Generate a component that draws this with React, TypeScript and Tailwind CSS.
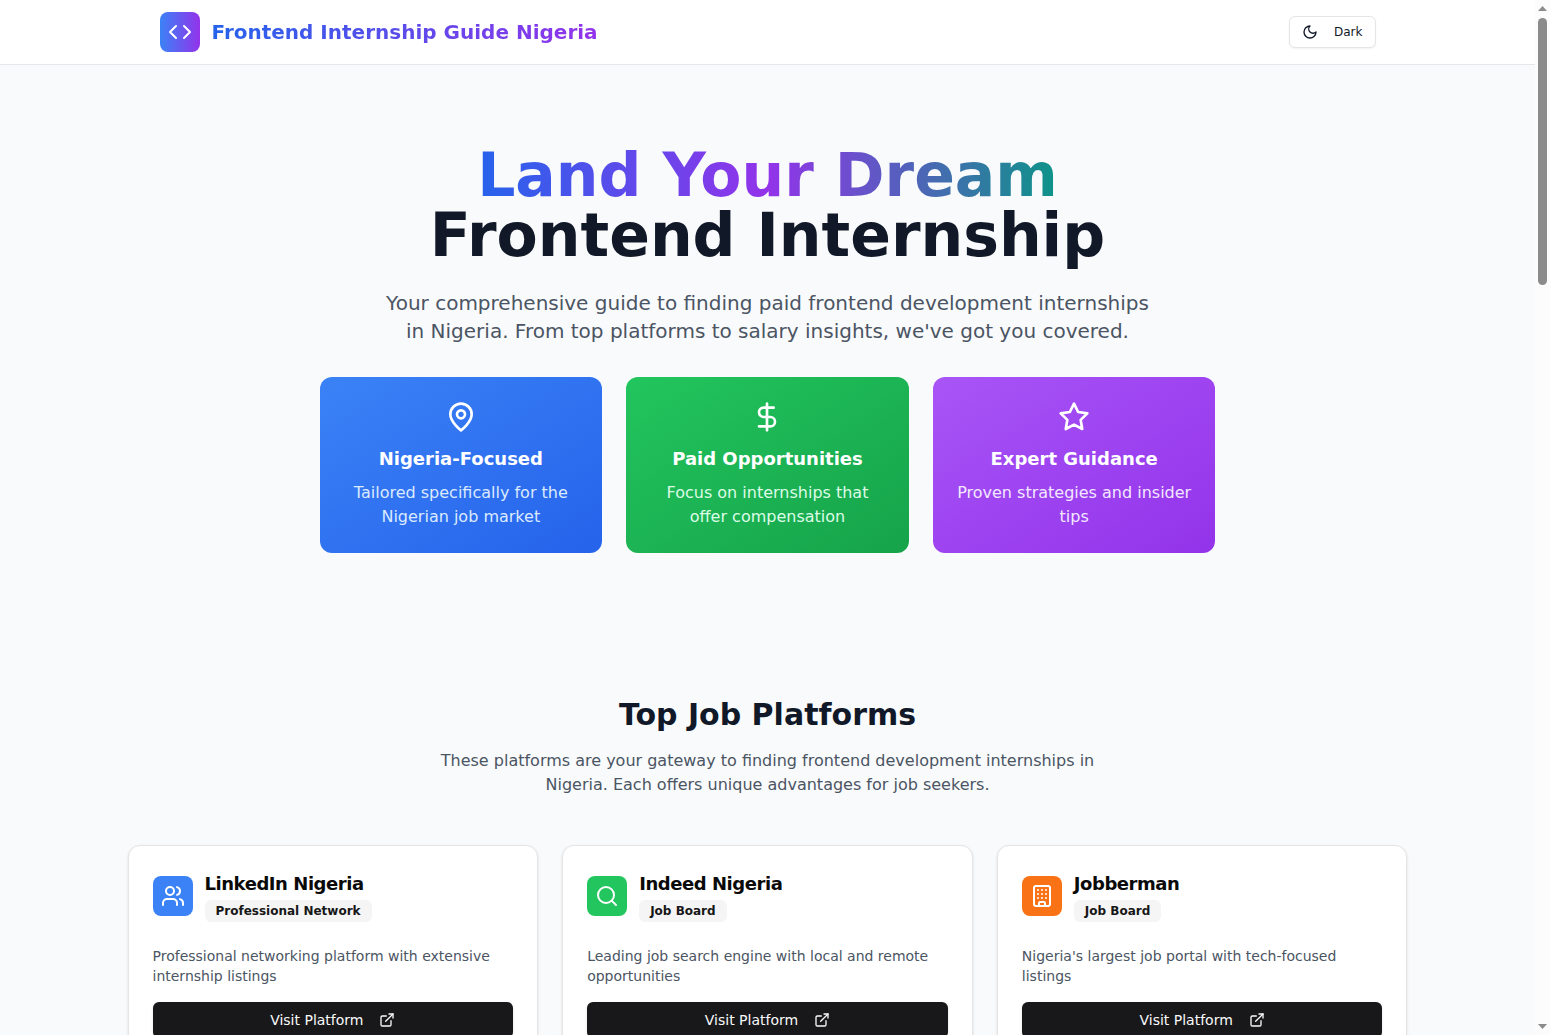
import type { ComponentType, ReactNode } from "react";
import { Building, Code, DollarSign, ExternalLink, Search, Users } from "lucide-react";

type IconProps = { className?: string };

function StrokeIcon({ className, children }: IconProps & { children: ReactNode }) {
  return (
    <svg
      viewBox="0 0 24 24"
      fill="none"
      stroke="currentColor"
      strokeWidth="2"
      strokeLinecap="round"
      strokeLinejoin="round"
      aria-hidden="true"
      className={className}
    >
      {children}
    </svg>
  );
}

function MoonIcon({ className }: IconProps) {
  return (
    <StrokeIcon className={className}>
      <path d="M12 3a6 6 0 0 0 9 9 9 9 0 1 1-9-9Z" />
    </StrokeIcon>
  );
}

function PinIcon({ className }: IconProps) {
  return (
    <StrokeIcon className={className}>
      <path d="M20 10c0 6-8 12-8 12s-8-6-8-12a8 8 0 0 1 16 0Z" />
      <circle cx="12" cy="10" r="3" />
    </StrokeIcon>
  );
}

function StarIcon({ className }: IconProps) {
  return (
    <StrokeIcon className={className}>
      <polygon points="12 2 15.09 8.26 22 9.27 17 14.14 18.18 21.02 12 17.77 5.82 21.02 7 14.14 2 9.27 8.91 8.26 12 2" />
    </StrokeIcon>
  );
}

type Feature = {
  title: string;
  text: string;
  icon: ComponentType<IconProps>;
  box: string;
  tint: string;
};

const features: Feature[] = [
  {
    title: "Nigeria-Focused",
    text: "Tailored specifically for the Nigerian job market",
    icon: PinIcon,
    box: "from-[#3b82f6] to-[#2563eb]",
    tint: "text-[#dbeafe]",
  },
  {
    title: "Paid Opportunities",
    text: "Focus on internships that offer compensation",
    icon: DollarSign,
    box: "from-[#22c55e] to-[#16a34a]",
    tint: "text-[#dcfce7]",
  },
  {
    title: "Expert Guidance",
    text: "Proven strategies and insider tips",
    icon: StarIcon,
    box: "from-[#a855f7] to-[#9333ea]",
    tint: "text-[#f3e8ff]",
  },
];

type Platform = {
  name: string;
  kind: string;
  text: string;
  icon: ComponentType<IconProps>;
  color: string;
  href: string;
};

const platforms: Platform[] = [
  {
    name: "LinkedIn Nigeria",
    kind: "Professional Network",
    text: "Professional networking platform with extensive internship listings",
    icon: Users,
    color: "bg-[#3b82f6]",
    href: "#linkedin",
  },
  {
    name: "Indeed Nigeria",
    kind: "Job Board",
    text: "Leading job search engine with local and remote opportunities",
    icon: Search,
    color: "bg-[#22c55e]",
    href: "#indeed",
  },
  {
    name: "Jobberman",
    kind: "Job Board",
    text: "Nigeria's largest job portal with tech-focused listings",
    icon: Building,
    color: "bg-[#f97316]",
    href: "#jobberman",
  },
];

function Header() {
  return (
    <header className="border-b border-[#e5e7eb] bg-white">
      <div className="mx-auto flex max-w-7xl items-center justify-between px-8 py-3">
        <div className="flex items-center gap-3">
          <div className="flex size-10 items-center justify-center rounded-lg bg-linear-to-r/srgb from-[#3b82f6] to-[#9333ea]">
            <Code className="size-6 text-white" />
          </div>
          <span className="bg-linear-to-r/srgb from-[#2563eb] to-[#9333ea] bg-clip-text text-xl font-bold text-transparent">
            Frontend Internship Guide Nigeria
          </span>
        </div>
        <button
          type="button"
          className="flex h-8 items-center gap-4 rounded-md border border-[#e5e5e5] bg-white px-3 text-xs font-medium text-[#111827] shadow-xs"
        >
          <MoonIcon className="size-4" />
          Dark
        </button>
      </div>
    </header>
  );
}

function Hero() {
  return (
    <section className="px-8 py-20 text-center">
      <h1 className="mb-6 text-6xl font-bold text-[#111827]">
        <span className="bg-linear-to-r/srgb from-[#2563eb] via-[#9333ea] to-[#0d9488] bg-clip-text text-transparent">
          Land Your Dream
        </span>
        <br />
        Frontend Internship
      </h1>
      <p className="mx-auto mb-8 max-w-3xl text-xl leading-7 text-[#4b5563]">
        Your comprehensive guide to finding paid frontend development internships in Nigeria. From
        top platforms to salary insights, we've got you covered.
      </p>
      <div className="mx-auto grid max-w-4xl grid-cols-3 gap-6">
        {features.map(({ title, text, icon: Icon, box, tint }) => (
          <div key={title} className={`rounded-xl bg-linear-to-br/srgb p-6 text-white ${box}`}>
            <Icon className="mx-auto mb-3 size-8" />
            <h3 className="mb-2 text-lg font-semibold">{title}</h3>
            <p className={tint}>{text}</p>
          </div>
        ))}
      </div>
    </section>
  );
}

function PlatformCard({ name, kind, text, icon: Icon, color, href }: Platform) {
  return (
    <article className="rounded-xl border border-[#e5e5e5] bg-white p-6 shadow-sm">
      <div className="mb-6 flex items-center gap-3">
        <div className={`flex size-10 items-center justify-center rounded-lg text-white ${color}`}>
          <Icon className="size-6" />
        </div>
        <div className="flex flex-col items-start gap-0.5">
          <h3 className="text-lg font-semibold tracking-tight text-[#0a0a0a]">{name}</h3>
          <span className="rounded-md border border-transparent bg-[#f5f5f5] px-2.5 py-0.5 text-xs font-semibold text-[#171717]">
            {kind}
          </span>
        </div>
      </div>
      <p className="mb-4 text-sm text-[#4b5563]">{text}</p>
      <a
        href={href}
        className="flex h-9 items-center justify-center gap-4 rounded-md bg-[#18181b] px-4 text-sm font-medium text-[#fafafa] shadow-sm"
      >
        Visit Platform
        <ExternalLink className="size-4" />
      </a>
    </article>
  );
}

function Platforms() {
  return (
    <section className="px-8 py-16">
      <div className="mb-12 text-center">
        <h2 className="mb-4 text-3xl font-bold text-[#111827]">Top Job Platforms</h2>
        <p className="mx-auto max-w-2xl text-[#4b5563]">
          These platforms are your gateway to finding frontend development internships in Nigeria.
          Each offers unique advantages for job seekers.
        </p>
      </div>
      <div className="mx-auto grid max-w-7xl grid-cols-3 gap-6">
        {platforms.map((platform) => (
          <PlatformCard key={platform.name} {...platform} />
        ))}
      </div>
    </section>
  );
}

function ScrollTrack() {
  return (
    <div
      aria-hidden="true"
      className="flex w-[15px] shrink-0 flex-col items-center justify-between bg-[#fcfcfc] py-1.5"
    >
      <div className="flex min-h-0 flex-1 flex-col items-center gap-[7px]">
        <svg viewBox="0 0 9 5" className="h-[5px] w-[9px] shrink-0 fill-[#8b8b8b]">
          <path d="M4.5 0 9 5H0z" />
        </svg>
        <div className="h-[267px] w-[9px] rounded-full bg-[#8b8b8b]" />
      </div>
      <svg viewBox="0 0 9 5" className="h-[5px] w-[9px] shrink-0 fill-[#8b8b8b]">
        <path d="M0 0h9L4.5 5z" />
      </svg>
    </div>
  );
}

export default function App() {
  return (
    <div className="flex h-screen overflow-hidden bg-[#f9fafc] font-['DejaVu_Sans',sans-serif]">
      <main className="min-w-0 flex-1">
        <Header />
        <Hero />
        <Platforms />
      </main>
      <ScrollTrack />
    </div>
  );
}
